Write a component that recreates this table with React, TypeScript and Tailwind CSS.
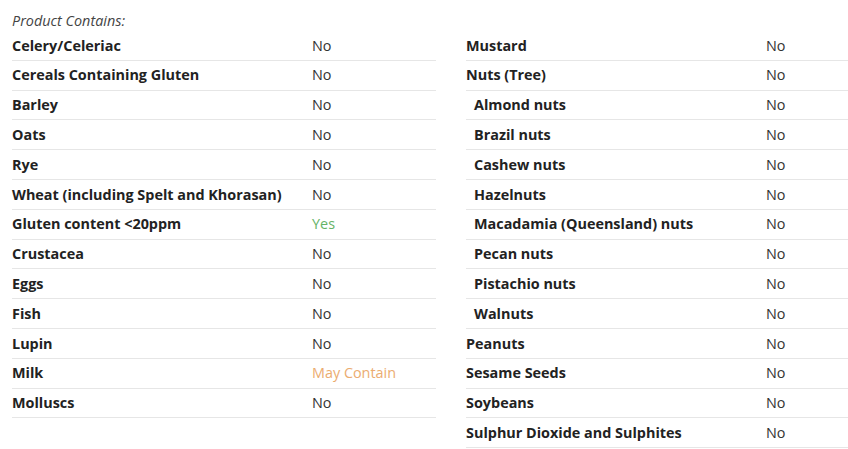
type Item = { name: string; value: string; sub?: boolean }

const left: Item[] = [
  { name: 'Celery/Celeriac', value: 'No' },
  { name: 'Cereals Containing Gluten', value: 'No' },
  { name: 'Barley', value: 'No' },
  { name: 'Oats', value: 'No' },
  { name: 'Rye', value: 'No' },
  { name: 'Wheat (including Spelt and Khorasan)', value: 'No' },
  { name: 'Gluten content <20ppm', value: 'Yes' },
  { name: 'Crustacea', value: 'No' },
  { name: 'Eggs', value: 'No' },
  { name: 'Fish', value: 'No' },
  { name: 'Lupin', value: 'No' },
  { name: 'Milk', value: 'May Contain' },
  { name: 'Molluscs', value: 'No' },
]

const right: Item[] = [
  { name: 'Mustard', value: 'No' },
  { name: 'Nuts (Tree)', value: 'No' },
  { name: 'Almond nuts', value: 'No', sub: true },
  { name: 'Brazil nuts', value: 'No', sub: true },
  { name: 'Cashew nuts', value: 'No', sub: true },
  { name: 'Hazelnuts', value: 'No', sub: true },
  { name: 'Macadamia (Queensland) nuts', value: 'No', sub: true },
  { name: 'Pecan nuts', value: 'No', sub: true },
  { name: 'Pistachio nuts', value: 'No', sub: true },
  { name: 'Walnuts', value: 'No', sub: true },
  { name: 'Peanuts', value: 'No' },
  { name: 'Sesame Seeds', value: 'No' },
  { name: 'Soybeans', value: 'No' },
  { name: 'Sulphur Dioxide and Sulphites', value: 'No' },
]

function valueColor(v: string) {
  if (v === 'Yes') return 'text-[#66b366]'
  if (v === 'May Contain') return 'text-[#ebac70]'
  return 'text-[#333333]'
}

function Column({ items }: { items: Item[] }) {
  return (
    <div className="w-[424px] shrink-0">
      {items.map((it) => (
        <div
          key={it.name}
          className="flex h-[29.8px] items-center border-b border-[#e6e6e6] text-[14.4px]"
        >
          <div
            className={`w-[300px] font-bold text-[#222222] ${it.sub ? 'pl-2' : ''}`}
          >
            {it.name}
          </div>
          <div className={valueColor(it.value)}>{it.value}</div>
        </div>
      ))}
    </div>
  )
}

export default function App() {
  return (
    <div
      className="h-[449px] w-[848px] overflow-hidden bg-white pl-3 pt-[11px]"
      style={{ fontFamily: '"Open Sans", sans-serif' }}
    >
      <div className="h-[20px] text-[14.4px] italic leading-[20px] text-[#444444]">
        Product Contains:
      </div>
      <div className="flex gap-[30px]">
        <Column items={left} />
        <Column items={right} />
      </div>
    </div>
  )
}
